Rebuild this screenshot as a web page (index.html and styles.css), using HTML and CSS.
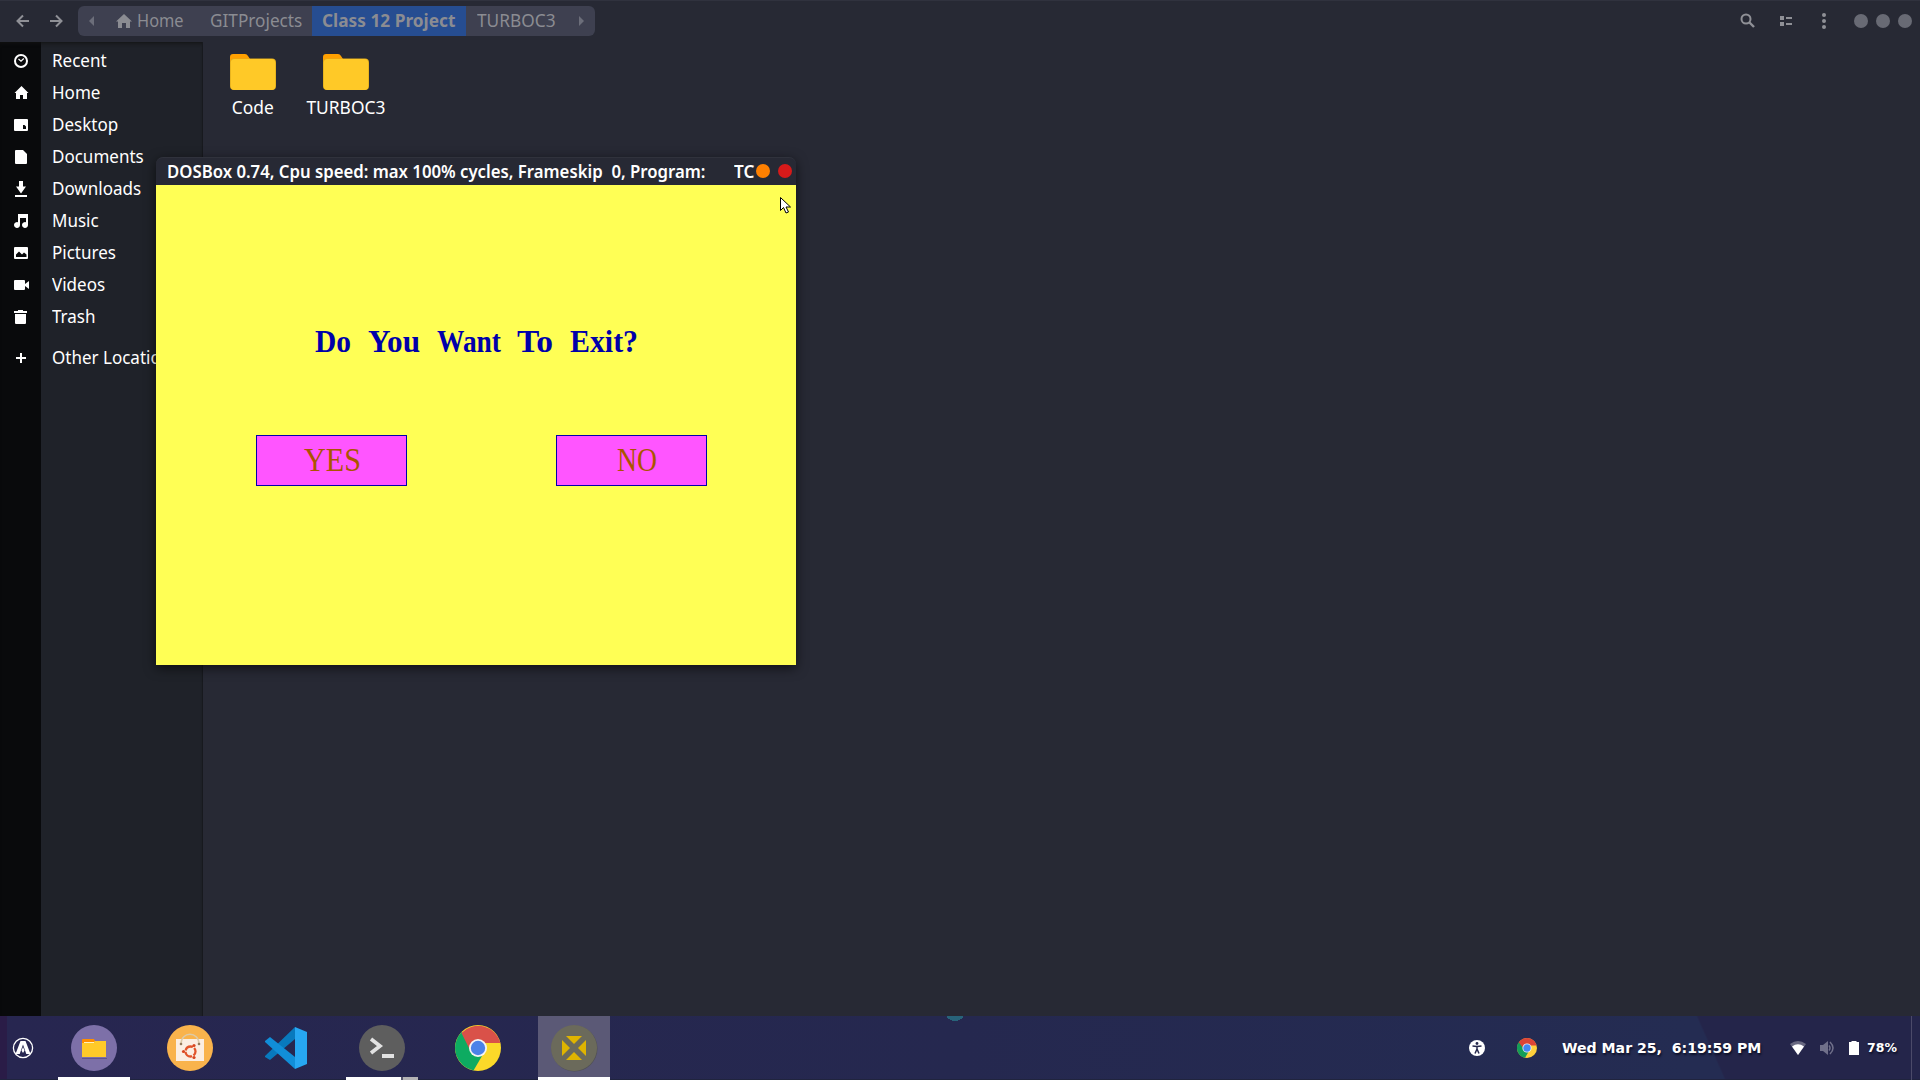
FILE: index.html
```
<!DOCTYPE html>
<html lang="en">
<head>
<meta charset="utf-8">
<title>Class 12 Project</title>
<link rel="stylesheet" href="styles.css">
</head>
<body>
<div class="desktop">
  <header class="header">
    <nav class="arrows">
      <svg width="16" height="16" viewBox="0 0 16 16"><path d="M14 8H3M8 2.5L2.5 8L8 13.5"/></svg>
      <svg width="16" height="16" viewBox="0 0 16 16"><path d="M2 8h11M8 2.5L13.500 8L8 13.500"/></svg>
    </nav>
    <div class="path">
      <svg class="tri left" width="6" height="12" viewBox="0 0 6 12"><path d="M5 1v10L0 6z"/></svg>
      <svg class="house" width="16" height="14" viewBox="0 0 16 14"><path d="M8 0L0 7.500h2V14h4V9h4v5h4V7.500h2z"/></svg>
      <span class="crumb home"><b>Home</b></span>
      <span class="crumb git"><b>GITProjects</b></span>
      <span class="crumb current"><b>Class 12 Project</b></span>
      <span class="crumb turbo"><b>TURBOC3</b></span>
      <svg class="tri right" width="6" height="12" viewBox="0 0 6 12"><path d="M0 1v10L5 6z"/></svg>
    </div>
    <div class="tools">
      <svg width="16" height="16" viewBox="0 0 16 16"><circle cx="6" cy="6" r="4.500" fill="none" stroke="#8f9096" stroke-width="2"/><path d="M9.500 9.500L14 14" stroke="#8f9096" stroke-width="2.400"/></svg>
      <svg width="14" height="12" viewBox="0 0 14 12"><path fill="#8f9096" d="M1 1h4v4H1zM7 2h6v2H7zM1 7h4v4H1zM7 8h6v2H7z"/></svg>
      <svg width="6" height="18" viewBox="0 0 6 18"><g fill="#8f9096"><circle cx="3" cy="3" r="2"/><circle cx="3" cy="9" r="2"/><circle cx="3" cy="15" r="2"/></g></svg>
      <div class="dots"><i></i><i></i><i></i></div>
    </div>
  </header>
  <main class="body">
    <aside class="places">
      <div class="place"><svg viewBox="0 0 16 16"><circle cx="8" cy="8" r="6" fill="none" stroke="#fff" stroke-width="2"/><path d="M5.500 6L8 8.200L10.800 5.500" fill="none" stroke="#fff" stroke-width="1.200"/></svg><span>Recent</span></div>
      <div class="place"><svg viewBox="0 0 16 16"><path d="M8.500 1L1.500 8h1.500v6h4v-4h3v4h4V8h1.500z"/></svg><span>Home</span></div>
      <div class="place"><svg viewBox="0 0 16 16"><path fill-rule="evenodd" d="M2 2h12q1 0 1 1v10q0 1-1 1H2q-1 0-1-1V3q0-1 1-1zM10 8v4h3V9.500L11.500 8z"/></svg><span>Desktop</span></div>
      <div class="place"><svg viewBox="0 0 16 16"><path d="M3 1h7l4 4v9q0 1-1 1H3q-1 0-1-1V2q0-1 1-1z"/></svg><span>Documents</span></div>
      <div class="place"><svg viewBox="0 0 16 16"><path d="M6 0h4v5.500h3L8 12.500L3 5.500h3zM2 14h12v2H2z"/></svg><span>Downloads</span></div>
      <div class="place"><svg viewBox="0 0 16 16"><path d="M5 1h10v11a3 3 0 1 1-2-2.800V5H7v7a3 3 0 1 1-2-2.800z"/></svg><span>Music</span></div>
      <div class="place"><svg viewBox="0 0 16 16"><path fill-rule="evenodd" d="M2 2h12q1 0 1 1v10q0 1-1 1H2q-1 0-1-1V3q0-1 1-1zM3 12h10.500V9.500L11 7.500L9 9.500L6 6.500L3 9.500z"/></svg><span>Pictures</span></div>
      <div class="place"><svg viewBox="0 0 16 16"><path d="M2 3h9q1 0 1 1v3l4-3v8l-4-3v3q0 1-1 1H2q-1 0-1-1V4q0-1 1-1z"/></svg><span>Videos</span></div>
      <div class="place"><svg viewBox="0 0 16 16"><path d="M1 2h4V1h5v1h4v2H1zM2 5h11v9q0 1-1 1H3q-1 0-1-1z"/></svg><span>Trash</span></div>
      <div class="place other"><svg viewBox="0 0 16 16"><path d="M7 3h2v4h4v2H9v4H7V9H3V7h4z"/></svg><span>Other Locations</span></div>
    </aside>
    <section class="files">
      <div class="file"><svg width="46" height="36" viewBox="0 0 46 36"><path fill="#ffa000" d="M3 0h12q2 0 3 2l2 3v8H0V3q0-3 3-3z"/><rect y="4.500" width="46" height="31.500" rx="4" fill="#e0ab1c"/><rect x=".7" y="5" width="44.600" height="31" rx="4" fill="#ffc927"/></svg><span class="code">Code</span></div>
      <div class="file"><svg width="46" height="36" viewBox="0 0 46 36"><path fill="#ffa000" d="M3 0h12q2 0 3 2l2 3v8H0V3q0-3 3-3z"/><rect y="4.500" width="46" height="31.500" rx="4" fill="#e0ab1c"/><rect x=".7" y="5" width="44.600" height="31" rx="4" fill="#ffc927"/></svg><span>TURBOC3</span></div>
    </section>
  </main>
  <footer class="panel">
    <svg class="menu" width="22" height="22" viewBox="0 0 22 22"><circle cx="11" cy="11" r="9.600" fill="none" stroke="#fff" stroke-width="1.300"/><path fill="#fff" d="M8.500 4h5L18.500 17h-4.200L11 7.500L7.700 17H3.500zM11 10l1.500 3.500L11 16l-1.500-2.500z"/></svg>
    <div class="task open"><svg viewBox="0 0 48 48"><circle cx="24" cy="24" r="23" fill="#7d70a8"/><path fill="#61558b" d="M12 34h25v1H12z"/><path fill="#ff8f00" d="M12 16q0-1 1-1h11l1 2v5H12z"/><path fill="#ffca28" d="M12 19h2l1-1h9l1-1h11v16H12z"/><path fill="#fff0bd" d="M14 18h10v1H14z"/></svg></div>
    <div class="task"><svg viewBox="0 0 48 48"><circle cx="24" cy="24" r="23" fill="#f9b34c"/><path fill="#fbeee2" d="M10 15h28v22H10z"/><path fill="none" stroke="#dccaa8" stroke-width="1.500" d="M15 20c0-13 18-13 18 0"/><circle cx="15" cy="20" r="1.300" fill="#927b5d"/><circle cx="33" cy="20" r="1.300" fill="#927b5d"/><circle cx="24.500" cy="27.500" r="5" fill="none" stroke="#e2552b" stroke-width="2.300" stroke-dasharray="9 1.470" stroke-dashoffset="4.500"/><g fill="#d9461f"><circle cx="17.500" cy="27.500" r="1.600"/><circle cx="28" cy="21.500" r="1.600"/><circle cx="28" cy="33.500" r="1.600"/></g></svg></div>
    <div class="task"><svg viewBox="0 0 48 48"><path fill="#0879bd" d="M3 32L33 3v12L8 36l-5-3z"/><path fill="#118ed8" d="M3 17l5-4l25 20v12L3 18z"/><path fill="#27a7f2" d="M33 3l12 5v32l-12 5z"/></svg></div>
    <div class="task open split"><svg viewBox="0 0 48 48"><circle cx="24" cy="24" r="23" fill="#5e5e5e"/><path d="M13 15l9 7l-9 7" fill="none" stroke="#e2e2e2" stroke-width="3.700"/><path fill="#e2e2e2" d="M24 30h12v4H24z"/></svg></div>
    <div class="task"><svg viewBox="0 0 48 48"><circle cx="24" cy="24" r="23" fill="#fbd929"/><path fill="#0dab61" d="M24 24L7.500 8A23 23 0 0 0 19.500 46.500L28 32z"/><path fill="#d95149" d="M24 24H15L7.500 9A23 23 0 0 1 46.500 19H24z"/><circle cx="24" cy="24" r="9" fill="#f4f4f4"/><circle cx="24" cy="24" r="7.200" fill="#4b82e8"/></svg></div>
    <div class="task open active"><svg viewBox="0 0 48 48"><circle cx="24.500" cy="24.500" r="23" fill="#505054"/><circle cx="24" cy="24" r="23" fill="#6b6a5b"/><path fill="#dfb400" d="M16 12h16l-8 8zM16 36h16l-8-8zM12 16v16l8-8zM36 16v16l-8-8z"/></svg></div>
    <div class="tray">
      <svg class="access" width="18" height="18" viewBox="0 0 18 18"><circle cx="9" cy="9" r="8" fill="#fff"/><circle cx="9" cy="4.500" r="1.400" fill="#25284c"/><path d="M4.500 7L9 7.500L13.500 7M9 7v4M9 10L7 14.500M9 10l2 4.500" fill="none" stroke="#25284c" stroke-width="1.500"/></svg>
      <svg class="minichrome" width="20" height="20" viewBox="0 0 46 46"><circle cx="23" cy="23" r="23" fill="#ffd03b"/><path fill="#129d58" d="M23 23L6.500 7A23 23 0 0 0 18.500 45.500L27 31z"/><path fill="#dd4437" d="M23 23H14L4 10A23 23 0 0 1 43 12L45 17H23z"/><circle cx="23" cy="23" r="10.500" fill="#f4f4f4"/><circle cx="23" cy="23" r="8.500" fill="#4487f4"/></svg>
      <time>Wed Mar 25,&nbsp; 6:19:59 PM</time>
      <svg class="wifi" width="16" height="14" viewBox="0 0 16 14"><path fill="#686881" d="M0 3Q8-3 16 3L8 14z"/><path fill="#fff" d="M2 5.500Q8 1 14 5.500L8 14z"/></svg>
      <svg class="volume" width="16" height="16" viewBox="0 0 16 16"><path fill="#70708a" d="M1 5h3l5-4v14l-5-4H1z"/><path fill="none" stroke="#70708a" stroke-width="1.500" d="M10 5.500q2 2.500 0 5M11 2q6 6 0 12"/></svg>
      <svg class="battery" width="10" height="14" viewBox="0 0 10 14"><path fill="#fff" d="M2.500 0h5v1H10v13H0V1h2.500z"/></svg>
      <span class="percent">78%</span>
    </div>
  </footer>
  <div class="dosbox">
    <div class="titlebar"><span class="title">DOSBox 0.74, Cpu speed: max 100% cycles, Frameskip&nbsp; 0, Program:</span><span class="tc">TC</span><i class="min"></i><i class="close"></i></div>
    <svg class="screen" width="640" height="480" viewBox="0 0 640 480" shape-rendering="crispEdges">
      <rect width="640" height="480" fill="#ffff55"/>
      <g class="question">
        <text x="159" y="167" textLength="36" lengthAdjust="spacingAndGlyphs">Do</text>
        <text x="212" y="167" textLength="52" lengthAdjust="spacingAndGlyphs">You</text>
        <text x="281" y="167" textLength="64" lengthAdjust="spacingAndGlyphs">Want</text>
        <text x="361" y="167" textLength="36" lengthAdjust="spacingAndGlyphs">To</text>
        <text x="414" y="167" textLength="68" lengthAdjust="spacingAndGlyphs">Exit?</text>
      </g>
      <g fill="#ff55ff" stroke="#0000aa"><rect x="100.500" y="250.500" width="150" height="50"/><rect x="400.500" y="250.500" width="150" height="50"/></g>
      <g class="answer">
        <text x="148" y="286" textLength="57" lengthAdjust="spacingAndGlyphs">YES</text>
        <text x="461" y="286" textLength="40" lengthAdjust="spacingAndGlyphs">NO</text>
      </g>
    </svg>
    <svg class="pointer" width="12" height="17" viewBox="0 0 12 17"><path d="M.5.500v13l3-3l2.500 5.500l2.500-1l-2.500-5h4.500z" fill="#fff" stroke="#000"/></svg>
  </div>
</div>
</body>
</html>
```
FILE: styles.css
```
* { box-sizing: border-box; }
body { margin: 0; font: 18px/32px "Noto Sans", sans-serif; color: #fff; background: #272934; overflow: hidden; }
svg { display: block; flex: none; }
.desktop { position: relative; width: 1920px; height: 1080px; display: flex; flex-direction: column; }

.header { height: 42px; display: flex; align-items: center; padding: 0 0 1px 15px; border-top: 1px solid #30323e; background: #272934; }
.arrows { display: flex; gap: 17px; width: 63px; }
.arrows path { fill: none; stroke: #8f9096; stroke-width: 2; }
.path { display: flex; align-items: center; width: 517px; height: 30px; border-radius: 6px; background: #3e4050; color: #8b8c92; fill: #8b8c92; }
.path b { font-weight: inherit; display: inline-block; transform-origin: left; }
.crumb { height: 30px; line-height: 28px; white-space: nowrap; flex: none; }
.tri { fill: #6c6e7a; }
.tri.left { margin-left: 11px; }
.house { margin-left: 21px; }
.home { margin-left: 5px; width: 73px; }
.home b { transform: scaleX(.91); }
.git { width: 102px; }
.git b { transform: scaleX(.955); }
.current { width: 154px; padding-left: 10px; background: #264d91; font-weight: 700; }
.current b { transform: scaleX(.96); }
.turbo { margin-left: 11px; width: 102px; }
.turbo b { transform: scaleX(.96); }
.tools { display: flex; align-items: center; margin-left: auto; padding-right: 8px; }
.tools svg:nth-child(1) { margin-right: 23px; }
.tools svg:nth-child(2) { margin-right: 28px; }
.tools svg:nth-child(3) { margin-right: 27px; }
.dots { display: flex; gap: 8px; }
.dots i { width: 14px; height: 14px; border-radius: 50%; background: #686a74; }

.body { height: 974px; display: flex; }
.places { width: 203px; padding-top: 3px; border-right: 1px solid #17191e; background: linear-gradient(90deg, #090a0c 41px, #1f2229 41px); box-shadow: inset 0 4px 4px -3px #111; }
.place { height: 32px; display: flex; align-items: center; padding-left: 13px; gap: 23px; white-space: nowrap; }
.place svg { width: 16px; height: 16px; fill: #fff; }
.place span { padding-bottom: 2px; line-height: 30px; transform-origin: left; transform: scaleX(.945); }
.other { margin-top: 9px; }
.files { display: flex; padding: 12px 0 0 3px; }
.file { width: 93px; display: flex; flex-direction: column; align-items: center; line-height: 34px; }
.file span { transform: scaleX(.965); }

.panel { height: 64px; display: flex; align-items: center; background: radial-gradient(circle at 955px -5px, #28637a 0 10px, transparent 10px), linear-gradient(90deg, #2a1c47 7px, transparent 7px), linear-gradient(66deg, transparent 88.500%, #24254a 88.600%), linear-gradient(90deg, #272650, #25284f 50%, #242c52 88%); border-bottom: 1px solid #20243e; }
.menu { margin: 0 24px 0 12px; }
.task { position: relative; width: 72px; height: 64px; margin-right: 24px; display: flex; align-items: center; justify-content: center; flex: none; }
.task svg { width: 48px; height: 48px; }
.open::after { content: ""; position: absolute; left: 0; bottom: 0; width: 72px; height: 3px; background: #fff; }
.split::after { background: linear-gradient(90deg, #fff 55px, #55556c 55px 57px, #b4b3b5 57px); }
.active { background: #5b5976; }
.tray { height: 64px; margin-left: auto; margin-right: 8px; padding-right: 14px; display: flex; align-items: center; border-right: 1px solid #4b4a69; font: bold 14.100px/20px "DejaVu Sans", sans-serif; white-space: nowrap; text-shadow: 1px 2px 2px #0d1028; }
.minichrome { margin: 0 25px 0 31px; }
.tray time { width: 199px; }
.wifi { margin-left: 29px; }
.volume { margin: 0 14px 0 13px; }
.percent { width: 30px; margin-left: 8px; font-size: 12.500px; }

.dosbox { position: absolute; left: 156px; top: 157px; width: 640px; border-radius: 7px 7px 0 0; box-shadow: 0 3px 12px #0009; }
.titlebar { height: 28px; display: flex; align-items: center; padding: 0 0 1px 11px; border-top: 1px solid #30323c; border-radius: 7px 7px 0 0; background: #272934; font-weight: 600; line-height: 26px; white-space: nowrap; overflow: hidden; }
.title { width: 567px; transform-origin: left; transform: scaleX(.93); flex: none; }
.tc { width: 22px; flex: none; transform-origin: left; transform: scaleX(.95); }
.titlebar i { width: 14px; height: 14px; border-radius: 50%; flex: none; }
.min { background: #ff8000; }
.close { margin-left: 8px; background: #d61a1a; }
.question { font: bold 32px "Liberation Serif", serif; fill: #0000aa; }
.answer { font: 33px "Liberation Serif", serif; fill: #aa5500; }
.pointer { position: absolute; left: 624px; top: 40px; }
```
